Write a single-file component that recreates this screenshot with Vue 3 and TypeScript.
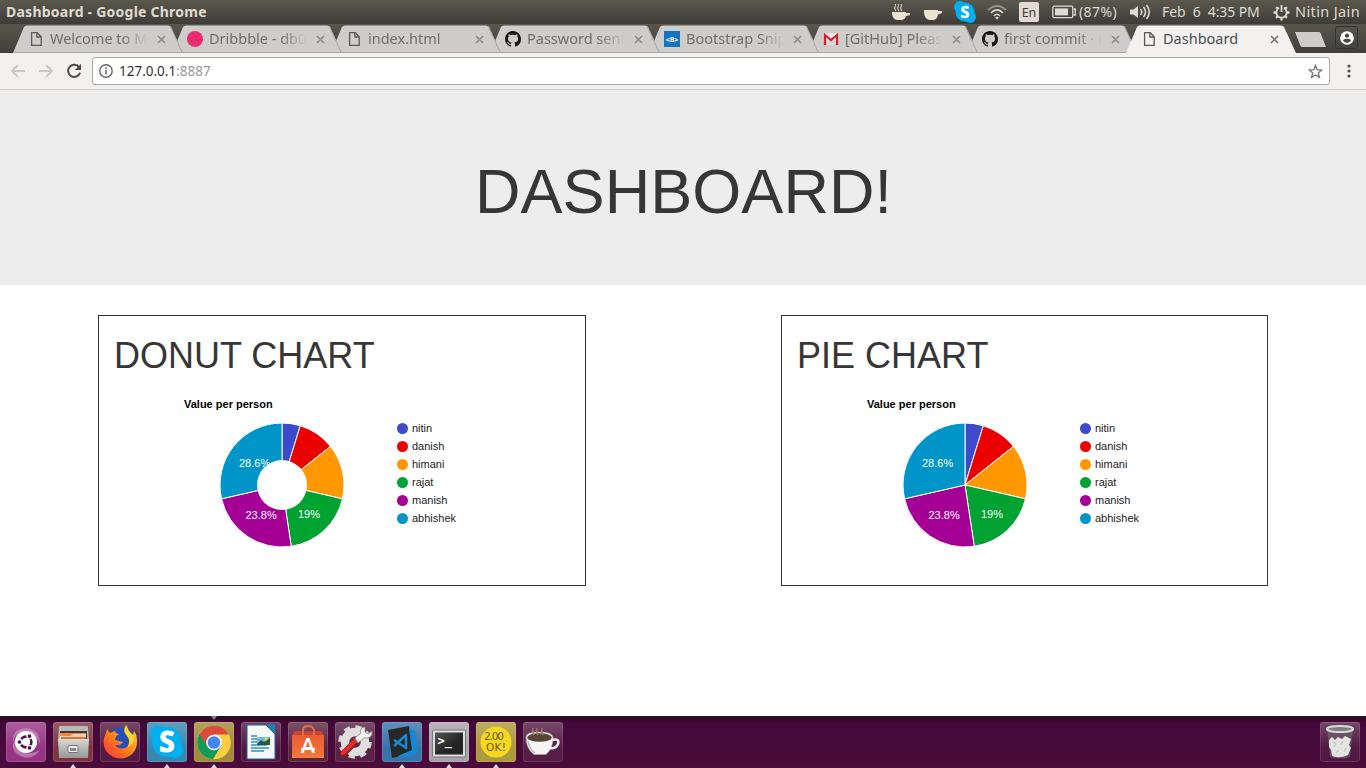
<script setup lang="ts">
interface Tab { title: string; icon: string; active?: boolean }
const tabs: Tab[] = [
  { title: 'Welcome to My', icon: 'page' },
  { title: 'Dribbble - db01', icon: 'dribbble' },
  { title: 'index.html', icon: 'page' },
  { title: 'Password sent', icon: 'github' },
  { title: 'Bootstrap Snip', icon: 'bootstrap' },
  { title: '[GitHub] Please', icon: 'gmail' },
  { title: 'first commit · n', icon: 'github' },
  { title: 'Dashboard', icon: 'page', active: true },
]

const people = [
  { name: 'nitin', value: 1, color: '#3b4bcb' },
  { name: 'danish', value: 2, color: '#eb0000' },
  { name: 'himani', value: 3, color: '#ff9800' },
  { name: 'rajat', value: 4, color: '#00a331' },
  { name: 'manish', value: 5, color: '#a40096' },
  { name: 'abhishek', value: 6, color: '#0095c8' },
]
const total = people.reduce((sum, p) => sum + p.value, 0)
const cx = 183
const cy = 106
const radius = 62

function point(fraction: number): string {
  const a = fraction * Math.PI * 2
  return `${(cx + radius * Math.sin(a)).toFixed(2)} ${(cy - radius * Math.cos(a)).toFixed(2)}`
}
let start = 0
const slices = people.map((p) => {
  const from = start / total
  start += p.value
  return { color: p.color, d: `M${cx} ${cy}L${point(from)}A${radius} ${radius} 0 0 1 ${point(start / total)}Z` }
})
const charts = [
  { title: 'DONUT CHART', hole: true },
  { title: 'PIE CHART', hole: false },
]

const dock = [
  { id: 'ubuntu', bg: '#963583' },
  { id: 'files', bg: '#7c3444', open: true },
  { id: 'firefox', bg: '#541b43' },
  { id: 'skype', bg: '#3a86ad', open: true },
  { id: 'chrome', bg: '#a18a3c', open: true, focused: true },
  { id: 'writer', bg: '#501a42' },
  { id: 'store', bg: '#5c2440' },
  { id: 'settings', bg: '#5a2046' },
  { id: 'code', bg: '#3a73a9', open: true },
  { id: 'terminal', bg: '#aaa2ab', open: true },
  { id: 'postit', bg: '#ad993e', open: true },
  { id: 'caffeine', bg: '#561d46' },
]
</script>

<template>
  <div class="desktop">
    <header class="menubar">
      <span class="window-title">Dashboard - Google Chrome</span>
      <div class="indicators">
        <svg width="20" height="20" viewBox="0 0 20 20"><path d="M1 10H15V11H19V13L15 14Q14 18 10 18H7Q2 18 1 12Z" fill="#ebe4d2" /><path d="M5 9Q3 7 4 5T4 2M8 9Q6 7 7 5T7 2M11 9Q9 7 10 5T10 2" stroke="#ebe4d2" fill="none" /></svg>
        <svg width="20" height="20" viewBox="0 0 20 20"><path d="M0 8H14V9H18V11L14 12.5Q13 18 9 18H6Q1 18 0 11Z" fill="#ebe4d2" /></svg>
        <svg width="22" height="22" viewBox="0 0 22 22"><circle cx="6" cy="6" r="6" fill="#00aff0" /><circle cx="16" cy="16" r="6" fill="#00aff0" /><circle cx="11" cy="11" r="9.5" fill="#00aff0" /><text x="11" y="16.5" text-anchor="middle" class="skype-s" font-size="16">S</text></svg>
        <svg width="20" height="16" viewBox="0 0 20 16"><g fill="none" stroke-width="1.7"><path d="M1 6Q10-2 19 6" stroke="#96938c" /><path d="M4 9Q10 3 16 9" stroke="#dfdbd2" /><path d="M7 12Q10 8.5 13 12" stroke="#dfdbd2" /></g><path d="M8 13.5Q10 11.8 12 13.5L10 15.5Z" fill="#dfdbd2" /></svg>
        <span class="lang">En</span>
        <svg width="25" height="14" viewBox="0 0 25 14"><rect x=".8" y="1.2" width="20" height="11.5" rx="1.5" fill="none" stroke="#dfdbd2" stroke-width="1.3" /><path d="M21.5 4H23.3V10H21.5" fill="none" stroke="#dfdbd2" stroke-width="1.3" /><rect x="3" y="3.4" width="13" height="7" fill="#dfdbd2" /></svg>
        <span class="battery">(87%)</span>
        <svg width="21" height="16" viewBox="0 0 21 16"><path d="M0 5.5H3.5L8 2V14L3.5 10.5H0Z" fill="#dfdbd2" /><path d="M10.5 5Q13 8 10.5 11M13.5 3Q17.5 8 13.5 13M16.5 1Q22 8 16.5 15" fill="none" stroke="#dfdbd2" stroke-width="1.5" /></svg>
        <span class="clock">Feb &nbsp;6 &nbsp;4:35 PM</span>
        <svg width="17" height="17" viewBox="0 0 17 17"><g fill="none" stroke="#dfdbd2"><path d="M6.2 3.8A5.2 5.2 0 1 0 10.8 3.8" stroke-width="1.8" /><path d="M8.5 1V8" stroke-width="1.8" /><path d="M3.1 3.1L4.8 4.8M13.9 3.1L12.2 4.8M.5 8.5H3M14 8.5H16.5M3.1 13.9L4.8 12.2M13.9 13.9L12.2 12.2M8.5 14V16.5" stroke-width="2.3" /></g></svg>
        <span class="user">Nitin Jain</span>
      </div>
    </header>

    <div class="tabstrip">
      <div v-for="(tab, i) in tabs" :key="i" class="tab" :class="{ active: tab.active }" :style="{ zIndex: tab.active ? 20 : 10 - i }">
        <svg class="shape" width="170" height="28" viewBox="0 0 170 28">
          <path class="fill" d="M0 28L11 2Q12 .5 14 .5H155Q157 .5 158 2L170 28Z" />
          <path v-if="!tab.active" d="M157 1L169.5 28M0 27.5H170" fill="none" stroke="#aaa8a6" />
        </svg>
        <svg class="favicon" width="16" height="16" viewBox="0 0 16 16">
          <g v-if="tab.icon === 'page'" fill="none" stroke="#5a5a5a" stroke-width="1.3"><path d="M3.6 1.7H9.2L13.2 5.7V14.3H3.6Z" /><path d="M8.9 2V6H13" /></g>
          <g v-else-if="tab.icon === 'dribbble'"><circle cx="8" cy="8" r="8" fill="#f12c74" /><path d="M5 1Q12 7 11.5 15M0 7Q8 8 13 2M2 13Q6 7 16 9" fill="none" stroke="#d92768" stroke-width=".9" /></g>
          <path v-else-if="tab.icon === 'github'" fill="#181616" d="M8 0C3.58 0 0 3.58 0 8c0 3.54 2.29 6.53 5.47 7.59.4.07.55-.17.55-.38 0-.19-.01-.82-.01-1.49-2.01.37-2.53-.49-2.69-.94-.09-.23-.48-.94-.82-1.13-.28-.15-.68-.52-.01-.53.63-.01 1.08.58 1.23.82.72 1.21 1.87.87 2.33.66.07-.52.28-.87.51-1.07-1.78-.2-3.64-.89-3.64-3.95 0-.87.31-1.59.82-2.15-.08-.2-.36-1.02.08-2.12 0 0 .67-.21 2.2.82.64-.18 1.32-.27 2-.27s1.36.09 2 .27c1.53-1.04 2.2-.82 2.2-.82.44 1.1.16 1.92.08 2.12.51.56.82 1.27.82 2.15 0 3.07-1.87 3.75-3.65 3.95.29.25.54.73.54 1.48 0 1.07-.01 1.93-.01 2.2 0 .21.15.46.55.38A8.01 8.01 0 0 0 16 8c0-4.42-3.58-8-8-8z" />
          <g v-else-if="tab.icon === 'bootstrap'"><rect width="16" height="16" fill="#1674bc" /><text x="8" y="10.8" text-anchor="middle" class="mono">&lt;B&gt;</text></g>
          <g v-else><path d="M1 2.5H15V14H1Z" fill="#eee" /><path d="M1 14L6 8L8 9.5L10 8L15 14Z" fill="#d9d9d9" /><path d="M2 14V4L8 9L14 4V14" fill="none" stroke="#d71e25" stroke-width="2.2" /></g>
        </svg>
        <span class="tab-title">{{ tab.title }}</span>
        <svg class="close" width="9" height="9" viewBox="0 0 9 9"><path d="M1 1L8 8M8 1L1 8" /></svg>
      </div>
      <svg class="new-tab" width="34" height="17" viewBox="0 0 34 17"><path d="M1 1H25Q26 1 26.5 2L32 16H8Q7 16 6.5 15Z" fill="#cfcdcc" /></svg>
      <span class="profile"><svg width="14" height="14" viewBox="0 0 14 14"><circle cx="7" cy="7" r="6.8" fill="#fff" /><circle cx="7" cy="4.7" r="2.1" fill="#494842" /><path d="M2.8 9Q7 6.4 11.2 9Q9.8 12 7 12T2.8 9Z" fill="#494842" /></svg></span>
    </div>

    <div class="toolbar">
      <svg class="back" width="16" height="16" viewBox="0 0 16 16"><path d="M15 8H2M8 2L2 8L8 14" /></svg>
      <svg class="forward" width="16" height="16" viewBox="0 0 16 16"><path d="M1 8H14M8 2L14 8L8 14" /></svg>
      <svg class="reload" width="16" height="16" viewBox="0 0 16 16"><path d="M13.2 4.3A6.1 6.1 0 1 0 14 9.7" fill="none" stroke="#4b4b4b" stroke-width="2" /><path d="M15 .8V7H8.8Z" fill="#4b4b4b" /></svg>
      <div class="address">
        <svg width="14" height="14" viewBox="0 0 14 14"><circle cx="7" cy="7" r="6.2" fill="none" stroke="#666" stroke-width="1.4" /><path d="M7 6V10.5M7 3.3V4.9" stroke="#666" stroke-width="1.5" /></svg>
        <span class="url">127.0.0.1<i>:8887</i></span>
        <svg class="star" width="15" height="15" viewBox="0 0 15 15"><path d="M7.5 1.4L9.2 5.7L13.8 6L10.3 9L11.4 13.4L7.5 11L3.6 13.4L4.7 9L1.2 6L5.8 5.7Z" fill="none" stroke="#737373" stroke-width="1.3" /></svg>
      </div>
      <svg class="menu" width="4" height="14" viewBox="0 0 4 14"><g fill="#505050"><circle cx="2" cy="2" r="1.6" /><circle cx="2" cy="7" r="1.6" /><circle cx="2" cy="12" r="1.6" /></g></svg>
    </div>

    <main class="page">
      <section class="jumbotron"><h1>DASHBOARD!</h1></section>
      <section class="cards">
        <article v-for="chart in charts" :key="chart.title" class="card">
          <h2>{{ chart.title }}</h2>
          <svg class="chart" width="456" height="200" viewBox="0 0 456 200">
            <text x="85" y="29" class="chart-title">Value per person</text>
            <path v-for="slice in slices" :key="slice.color" :d="slice.d" :fill="slice.color" stroke="#fff" />
            <g class="percent"><text x="140" y="88">28.6%</text><text x="146.5" y="140">23.8%</text><text x="199" y="139">19%</text></g>
            <circle v-if="chart.hole" :cx="cx" :cy="cy" r="25" fill="#fff" />
            <g v-for="(p, i) in people" :key="p.name" class="legend">
              <circle cx="303.5" :cy="49.5 + i * 18" r="5.5" :fill="p.color" />
              <text x="313" :y="53 + i * 18">{{ p.name }}</text>
            </g>
          </svg>
        </article>
      </section>
    </main>

    <footer class="dock">
      <svg width="0" height="0" class="defs">
        <defs>
          <linearGradient id="fox" x1="0" y1="1" x2="1" y2="0"><stop stop-color="#f52c47" /><stop offset=".45" stop-color="#ff7a18" /><stop offset="1" stop-color="#ffe226" /></linearGradient>
          <linearGradient id="metal" x1="0" y1="0" x2="0" y2="1"><stop stop-color="#d8d8d4" /><stop offset="1" stop-color="#969692" /></linearGradient>
          <linearGradient id="bag" x1="0" y1="0" x2="0" y2="1"><stop stop-color="#e95b32" /><stop offset="1" stop-color="#f47a3b" /></linearGradient>
          <linearGradient id="screen" x1="0" y1="0" x2="1" y2="1"><stop stop-color="#555" /><stop offset=".6" stop-color="#242424" /></linearGradient>
        </defs>
      </svg>
      <div v-for="item in dock" :key="item.id" class="tile" :style="{ backgroundColor: item.bg }">
        <svg width="40" height="40" viewBox="0 0 40 40">
          <g v-if="item.id === 'ubuntu'">
            <path d="M7 22Q5 7 20 6Q34 7 34 22Q29 10 20 10Q11 12 7 22ZM10 12Q1 30 17 35Q27 38 34 28Q24 34 15 29Q8 24 10 12Z" fill="#c997c0" opacity=".65" />
            <circle cx="20" cy="20" r="11" fill="#fff" /><circle cx="20" cy="20" r="5.4" fill="none" stroke="#4d154b" stroke-width="2.6" /><g stroke="#fff" stroke-width="1.3" fill="#4d154b"><circle cx="13.5" cy="20" r="2.5" /><circle cx="23.5" cy="14.2" r="2.5" /><circle cx="23.5" cy="25.8" r="2.5" /></g>
          </g>
          <g v-else-if="item.id === 'files'">
            <path d="M6 5Q6 4 7 4H34Q35 4 35 5L36 18H5Z" fill="#b9bbb7" /><rect x="7" y="9" width="27" height="9" fill="#3a3935" /><path d="M7 11H33V18H7Z" fill="#f28a45" /><path d="M7 14H18L20 12H33V18H7Z" fill="#e9cfae" /><path d="M8 15H33V18H8Z" fill="#d67540" /><path d="M5 17H36L35 36H6Z" fill="url(#metal)" /><rect x="15" y="23.5" width="10" height="7" rx="1" fill="#eee" stroke="#747474" /><rect x="17" y="26" width="6" height="3" fill="#888" />
          </g>
          <g v-else-if="item.id === 'firefox'">
            <circle cx="21" cy="19" r="13.5" fill="#274fb9" /><path d="M27 3Q23 9 28 14Q31 20 27 25Q20 29 15 23Q20 24 23 20L15 18L16 14.5L19 12Q16 12 15 9L10 11L7 7L6 11Q1 20 6 29Q12 37 22 36.5Q37 34 37 19Q37 13 34 9L33 13Q27 9 27 3Z" fill="url(#fox)" /><path d="M26 3Q22 9 27 14Q31 18 28 25Q34 22 34 14Q28 9 26 3Z" fill="#ffd92f" />
          </g>
          <g v-else-if="item.id === 'skype'"><circle cx="12" cy="12" r="8.5" fill="#00aff0" /><circle cx="28" cy="28" r="8.5" fill="#00aff0" /><circle cx="20" cy="20" r="15" fill="#00aff0" /><text x="20" y="30" text-anchor="middle" class="skype-s wide" font-size="28">S</text></g>
          <g v-else-if="item.id === 'chrome'">
            <circle cx="20" cy="20.5" r="16.8" fill="#ffcd46" /><path d="M20 20.5L5.5 12A16.8 16.8 0 0 0 19 37.3L27 24Z" fill="#0f9d58" /><path d="M20 20.5L12.7 24L5.5 12A16.8 16.8 0 0 1 34.8 12.5H20Z" fill="#dc4b3e" /><circle cx="20" cy="20.5" r="7.8" fill="#fff" /><circle cx="20" cy="20.5" r="6.3" fill="#4285f4" />
          </g>
          <g v-else-if="item.id === 'writer'">
            <path d="M6 3H25L34 12V37H6Z" fill="#f7f7f7" stroke="#17699e" /><path d="M25 2H34V12Z" fill="#1b80b8" /><path d="M10 14H16M10 17H16M10 20H16M10 23H26M10 26H28M10 29H23" stroke="#2e92c6" stroke-width="1.5" /><rect x="16" y="15" width="13" height="8" fill="#6ebcea" /><path d="M16 22L20 18L23 20L29 16V23H16Z" fill="#305734" /><circle cx="25" cy="17" r="1.5" fill="#f5db4d" />
          </g>
          <g v-else-if="item.id === 'store'">
            <path d="M4 13H36V36H4Z" fill="url(#bag)" /><path d="M4 13L7 9H33L36 13Z" fill="#c74731" /><path d="M15 14V8Q15 4 20 4T26 8V14" fill="none" stroke="#f06c49" stroke-width="1.8" /><text x="20" y="31" text-anchor="middle" class="store-a">A</text><path d="M13 27H27" stroke="#fff" stroke-width="2" />
          </g>
          <g v-else-if="item.id === 'settings'">
            <circle cx="20" cy="20" r="14.5" fill="none" stroke="#d8d8d8" stroke-width="4.5" stroke-dasharray="6 5.39" /><circle cx="20" cy="20" r="10" fill="none" stroke="#dedede" stroke-width="8.5" /><path d="M8 32L22 18" stroke="#901c1c" stroke-width="6.5" stroke-linecap="round" /><path d="M8 31L21 18" stroke="#df2e2b" stroke-width="4" stroke-linecap="round" /><path d="M20 16L26 11Q24 6 30 5L30 10L33 12L37 9Q38 17 29 16L23 21Z" fill="#f0f0ed" stroke="#8a8a88" stroke-width=".8" />
          </g>
          <g v-else-if="item.id === 'code'">
            <path d="M6 8L27 4L32 32L10 36Z" fill="#252829" /><path d="M27 7L33 9L36 30L31 34L14 36L18 33L30 28Z" fill="#1787d2" /><path d="M12 18L24 26V13L12 24" fill="none" stroke="#1788d3" stroke-width="2.5" stroke-linejoin="round" />
          </g>
          <g v-else-if="item.id === 'terminal'"><rect x="3.5" y="8" width="33" height="27" rx="1" fill="#ddd" stroke="#777" /><rect x="6" y="10.5" width="28" height="22" fill="url(#screen)" /><text x="8.5" y="23" class="prompt">&gt;_</text></g>
          <g v-else-if="item.id === 'postit'"><circle cx="20" cy="20" r="15.5" fill="#f7d81f" /><text x="8" y="17.5" class="note" textLength="20">2.00</text><text x="10" y="29" class="note" textLength="20">OK!</text></g>
          <g v-else>
            <path d="M3 15Q3 10 16 10T30 15Q30 27 23 32.5H11Q3 27 3 15Z" fill="#f5f5f3" stroke="#aaa" stroke-width=".6" /><ellipse cx="16.5" cy="15.5" rx="12.3" ry="4.3" fill="#584536" /><path d="M29 18Q37 16 35 22Q33 27 27 26" fill="none" stroke="#eee" stroke-width="2.5" /><path d="M5 19Q6 27 12 31" fill="none" stroke="#bbb" stroke-width="1.5" /><path d="M11 13Q9 10 10 6M15 13Q13 10 14 6M20 13Q18 10 19 6" fill="none" stroke="#9d786b" stroke-width="1.5" />
          </g>
        </svg>
        <span v-if="item.open" class="open-mark" />
        <span v-if="item.focused" class="focus-mark" />
      </div>
      <div class="tile trash">
        <svg width="40" height="40" viewBox="0 0 40 40"><path d="M7 7L10 35Q20 38 30 35L33 7Z" fill="#756579" opacity=".6" /><path d="M9 18L12 15L15 18L18 15L22 17L25 14L31 17L29 23L31 26L28 33Q20 37 12 34L11 28L9 25Z" fill="#e4e4e0" /><path d="M13 20L16 22L14 25M19 28L16 31M23 19L21 23M26 26L24 30" fill="none" stroke="#c4c6c1" stroke-width="1.3" /><ellipse cx="20" cy="7" rx="13" ry="3" fill="#857b86" stroke="#d7dad4" stroke-width="2" /></svg>
      </div>
    </footer>
  </div>
</template>

<style scoped>
.desktop { width: 1366px; height: 768px; display: flex; flex-direction: column; overflow: hidden; background: #fff; font-family: "Noto Sans", sans-serif; }
.menubar { height: 24px; flex: none; display: flex; align-items: center; justify-content: space-between; background: linear-gradient(#5b584d, #3d3c37); color: #dfdbd2; font-size: 14px; box-sizing: border-box; }
.window-title { padding: 0 0 2px 6px; font-weight: 700; letter-spacing: .24px; white-space: nowrap; }
.indicators { width: 475px; height: 24px; display: grid; grid-template-columns: 33px 30px 33px 32px 33px 27px 51px 32px 111px 22px 71px; align-items: center; white-space: nowrap; }
.indicators svg { display: block; }
.battery, .clock, .user { padding-bottom: 2px; }
.battery { letter-spacing: .4px; }
.clock { letter-spacing: -.08px; }
.user { font-size: 14.5px; letter-spacing: .38px; }
.lang { width: 20px; height: 20px; border-radius: 2px; background: #dfdbd2; color: #3d3c37; font-size: 12.5px; line-height: 21px; text-align: center; }
.skype-s { font-family: "Open Sans", sans-serif; font-weight: 700; fill: #fff; stroke: #fff; stroke-width: .4; }
.wide { stroke-width: 1; }
.tabstrip { height: 29px; flex: none; display: flex; align-items: flex-end; padding-left: 12.5px; background: linear-gradient(#59564c, #403f3a); }
.tab { position: relative; width: 170px; height: 28px; flex: none; margin-right: -11px; box-sizing: border-box; display: flex; align-items: center; padding-left: 15px; }
.shape { position: absolute; inset: 0; }
.fill { fill: #cfcdcc; }
.active .fill { fill: #f2f1f0; }
.favicon { position: relative; flex: none; }
.tab-title { position: relative; width: 100px; margin-left: 6.5px; padding-bottom: 2px; overflow: hidden; white-space: nowrap; font-size: 14.5px; line-height: 20px; color: #6f6e6d; mask-image: linear-gradient(90deg, #000 72px, transparent 98px); }
.active .tab-title { color: #4d4d4d; mask-image: none; }
.close { position: relative; margin-left: 6.5px; flex: none; fill: none; stroke: #8e8d8c; stroke-width: 1.7; }
.active .close { stroke: #777; }
.mono { font: 700 7px "DejaVu Sans Mono", monospace; fill: #fff; }
.new-tab { margin-left: 9.5px; margin-bottom: 5px; flex: none; }
.profile { width: 21px; height: 21px; margin-left: 7px; margin-bottom: 4px; border: 1px solid #34332f; border-radius: 3px; display: flex; align-items: center; justify-content: center; }
.toolbar { height: 37px; flex: none; box-sizing: border-box; display: flex; align-items: center; border-bottom: 1px solid #cfcdcc; background: #f2f1f0; }
.back, .forward { fill: none; stroke: #cac9c8; stroke-width: 1.9; flex: none; }
.back { margin-left: 10px; }
.forward { margin-left: 12px; }
.reload { margin-left: 12px; flex: none; }
.address { width: 1238px; height: 28px; box-sizing: border-box; margin-left: 10px; display: flex; align-items: center; padding: 0 6px; border: 1px solid #aaa8a6; border-radius: 3px; background: #fff; }
.url { margin-left: 6px; font-size: 13.5px; color: #333; }
.url i { font-style: normal; color: #999; }
.star { margin-left: auto; }
.menu { margin-left: 16.5px; }
.page { flex: 1; font-family: "Liberation Sans", Arial, sans-serif; color: #363636; }
.jumbotron { height: 195px; background: #ededed; box-sizing: border-box; padding-top: 67px; text-align: center; }
h1, h2 { margin: 0; font-weight: 400; line-height: 1.1; }
h1 { font-size: 63px; letter-spacing: .05px; text-indent: 1px; }
.cards { display: flex; gap: 195px; padding: 30px 98px 0; }
.card { width: 488px; height: 271px; flex: none; box-sizing: border-box; border: 1px solid #333; }
.card + .card { width: 487px; }
h2 { margin: 20px 15px 0; font-size: 36px; height: 43px; line-height: 40px; }
.chart { display: block; }
.chart text { font-size: 11px; }
.chart .chart-title { font-weight: 700; fill: #000; }
.percent { fill: #fff; }
.legend text { fill: #222; }
.dock { height: 52px; flex: none; box-sizing: border-box; display: flex; align-items: flex-start; gap: 7px; padding: 6px 6px 0; background: linear-gradient(#27101f 0, #350629 3px, #43083a 7px, #4b0b3b 100%); }
.defs { position: absolute; }
.tile { position: relative; width: 40px; height: 40px; flex: none; border-radius: 3px; box-shadow: inset 0 0 0 1px rgba(255, 255, 255, .13); background-image: linear-gradient(rgba(255, 255, 255, .2), rgba(255, 255, 255, 0) 65%); }
.tile svg { display: block; }
.trash { margin-left: auto; background-color: #511842; }
.open-mark, .focus-mark { position: absolute; left: 17px; border: 3px solid transparent; }
.open-mark { bottom: -6px; border-top: 0; border-bottom: 4px solid #ddd; }
.focus-mark { top: -6px; border-bottom: 0; border-top: 4px solid #8c7f88; }
.store-a { font: 700 20px Lato, sans-serif; fill: #fff; }
.prompt { font: 700 12px "DejaVu Sans Mono", monospace; fill: #fff; }
.note { font: 10.5px "DejaVu Sans", sans-serif; fill: #6b5b10; }
</style>
